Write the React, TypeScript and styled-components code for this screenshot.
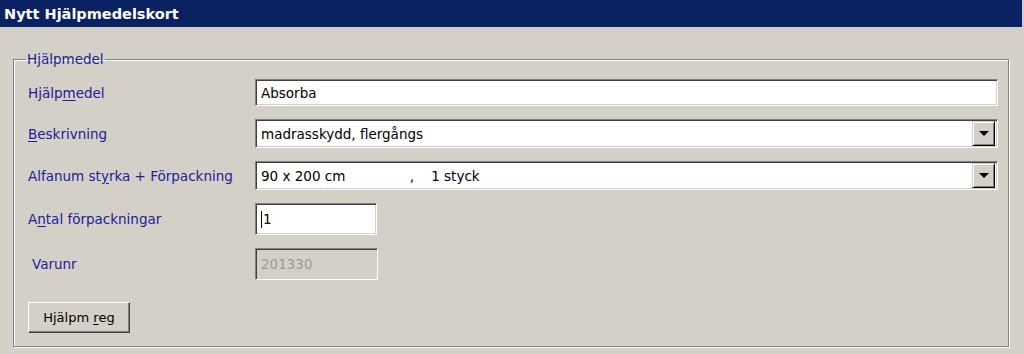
import React from 'react';
import styled, { createGlobalStyle } from 'styled-components';

const face = '#d4d0c8';
const shadow = '#808080';
const darkShadow = '#404040';
const labelColor = '#20209a';

const GlobalStyle = createGlobalStyle`
  html, body {
    margin: 0;
    padding: 0;
    background: ${face};
  }
  body {
    font-family: "DejaVu Sans", "Liberation Sans", sans-serif;
    width: 1024px;
    height: 354px;
    overflow: hidden;
  }
`;

const Window = styled.div`
  width: 1024px;
  height: 354px;
  display: flex;
  flex-direction: column;
  background: ${face};
`;

const TitleBar = styled.div`
  height: 27px;
  margin-right: 2px;
  background: #0a2162;
  color: #fff;
  font-weight: bold;
  font-size: 14.5px;
  display: flex;
  align-items: center;
  padding-left: 4px;
`;

const Body = styled.div`
  flex: 1;
  padding: 24px 15px 7px 13px;
  display: flex;
`;

const Group = styled.fieldset`
  flex: 1;
  margin: 0;
  padding: 12px 10px 12px 14px;
  border: 1px solid ${shadow};
  box-shadow: inset 1px 1px 0 #fff, 1px 1px 0 #fff;
  display: grid;
  grid-template-columns: 227px 1fr;
  align-items: center;
  align-content: start;
  row-gap: 13px;
`;

const Legend = styled.legend`
  color: ${labelColor};
  font-size: 13.5px;
  padding: 0 1px;
  margin-left: -2px;
`;

const Label = styled.div<{ $indent?: boolean }>`
  color: ${labelColor};
  font-size: 13.5px;
  white-space: nowrap;
  padding-left: ${(p) => (p.$indent ? '4px' : '0')};
`;

const Key = styled.span`
  text-decoration: underline;
  text-underline-offset: 2px;
`;

const Field = styled.div<{ $w?: number; $h?: number; $disabled?: boolean }>`
  box-sizing: border-box;
  height: ${(p) => p.$h ?? 27}px;
  width: ${(p) => (p.$w ? `${p.$w}px` : 'auto')};
  background: ${(p) => (p.$disabled ? face : '#fff')};
  color: ${(p) => (p.$disabled ? '#9a9a9a' : '#000')};
  border-top: 1px solid ${shadow};
  border-left: 1px solid ${shadow};
  border-bottom: 1px solid #fff;
  border-right: 1px solid #fff;
  box-shadow: inset 1px 1px 0 ${darkShadow}, inset -1px -1px 0 ${face};
  display: flex;
  align-items: center;
  padding: 0 2px 0 5px;
  font-size: 13.5px;
  white-space: pre;
`;

const FieldText = styled.span`
  flex: 1;
`;

const DropButton = styled.div`
  box-sizing: border-box;
  width: 23px;
  height: 25px;
  background: ${face};
  border-top: 1px solid ${face};
  border-left: 1px solid ${face};
  border-right: 1px solid #000;
  border-bottom: 1px solid #000;
  box-shadow: inset 1px 1px 0 #fff, inset -1px -1px 0 ${shadow};
  display: flex;
  align-items: center;
  justify-content: center;
`;

const Arrow = styled.div`
  width: 0;
  height: 0;
  border-left: 5px solid transparent;
  border-right: 5px solid transparent;
  border-top: 5px solid #000;
`;

const Caret = styled.span`
  display: inline-block;
  width: 1px;
  height: 17px;
  background: #000;
  margin-right: 1px;
`;

const ButtonRow = styled.div`
  grid-column: 1 / span 2;
  padding-top: 9px;
`;

const Button = styled.div`
  box-sizing: border-box;
  width: 102px;
  height: 31px;
  background: ${face};
  border-top: 1px solid #fff;
  border-left: 1px solid #fff;
  border-right: 1px solid ${darkShadow};
  border-bottom: 1px solid ${darkShadow};
  box-shadow: inset -1px -1px 0 ${shadow};
  display: flex;
  align-items: center;
  justify-content: center;
  font-size: 13px;
  color: #000;
`;

const Combo = ({ text }: { text: string }) => (
  <Field $h={29}>
    <FieldText>{text}</FieldText>
    <DropButton>
      <Arrow />
    </DropButton>
  </Field>
);

export default function App() {
  return (
    <Window>
      <GlobalStyle />
      <TitleBar>Nytt Hjälpmedelskort</TitleBar>
      <Body>
        <Group>
          <Legend>Hjälpmedel</Legend>
          <Label>
            Hjälp<Key>m</Key>edel
          </Label>
          <Field>Absorba</Field>
          <Label>
            <Key>B</Key>eskrivning
          </Label>
          <Combo text="madrasskydd, flergångs" />
          <Label>
            Alfanum st<Key>y</Key>rka + Förpackning
          </Label>
          <Combo text={'90 x 200 cm               ,    1 styck'} />
          <Label>
            A<Key>n</Key>tal förpackningar
          </Label>
          <Field $w={122} $h={32}>
            <Caret />1
          </Field>
          <Label $indent>Varunr</Label>
          <Field $w={123} $h={32} $disabled>
            201330
          </Field>
          <ButtonRow>
            <Button>
              Hjälpm&nbsp;<Key>r</Key>eg
            </Button>
          </ButtonRow>
        </Group>
      </Body>
    </Window>
  );
}
